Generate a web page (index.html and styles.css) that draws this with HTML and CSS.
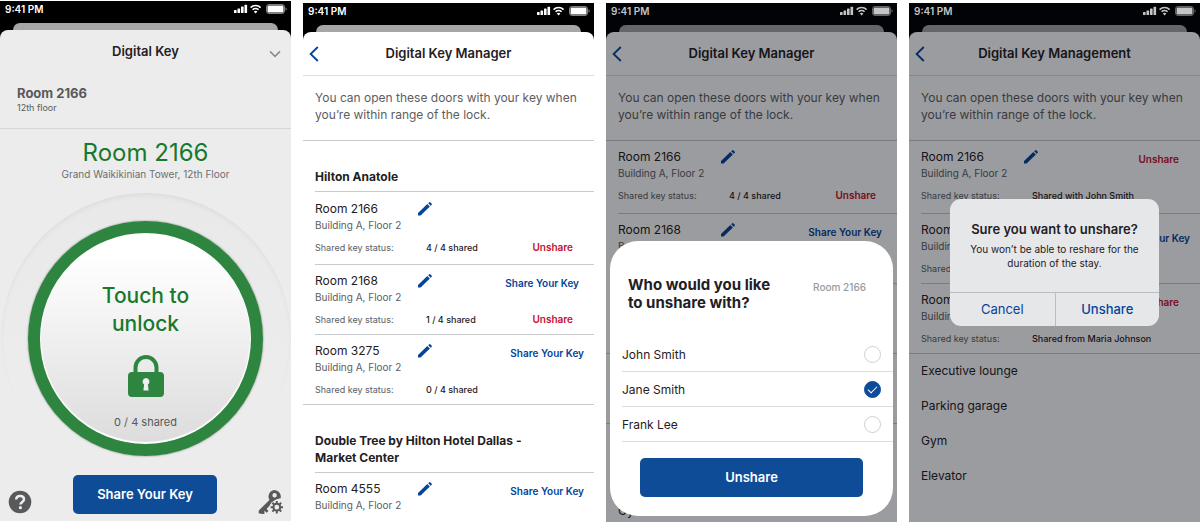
FILE: index.html
```html
<!DOCTYPE html>
<html lang="en">
<head>
<meta charset="utf-8">
<meta name="viewport" content="width=device-width, initial-scale=1">
<title>Digital Key</title>
<link rel="stylesheet" href="styles.css">
</head>
<body>
<svg class="defs" aria-hidden="true">
  <symbol id="status" viewBox="0 0 54 12">
    <rect x="0" y="7" width="2.6" height="3" rx=".6"/><rect x="3.5" y="5.4" width="2.6" height="4.6" rx=".6"/><rect x="7" y="3.6" width="2.6" height="6.4" rx=".6"/><rect x="10.5" y="1.8" width="2.6" height="8.2" rx=".6"/>
    <g fill="none" stroke="currentColor" stroke-width="1.6"><path d="M16.6 4.6a7.1 7.1 0 0 1 10 0"/><path d="M18.6 6.8a4.3 4.3 0 0 1 6 0"/></g>
    <path d="M21.6 10.4l-1.8-1.9a2.6 2.6 0 0 1 3.6 0z"/>
    <rect x="32.5" y="1.5" width="18" height="9" rx="2.4" fill="none" stroke="currentColor" stroke-opacity=".5"/><rect x="33.5" y="2.500" width="16" height="7" rx="1.2"/><path d="M51.6 4.3c1.4.5 1.4 2.9 0 3.4z" opacity=".6"/>
  </symbol>
  <symbol id="pencil" viewBox="0 0 14 14">
    <path d="M0 13.6v-2.5l9.3-9 2.6 2.5-9.3 9z"/><path d="M10.2 1.3l.9-.9c.4-.4.9-.4 1.3 0l1.2 1.2c.4.4.4.9 0 1.3l-.9.9z"/>
  </symbol>
  <symbol id="back" viewBox="0 0 10 16"><path d="M8.8 1L1.6 8l7.2 7" fill="none" stroke="currentColor" stroke-width="1.8"/></symbol>
</svg>

<main class="screens">
  <section class="phone phone--key">
    <div class="statusbar"><span>9:41 PM</span><svg class="statusbar__icons"><use href="#status"/></svg></div>
    <div class="peek"></div>
    <div class="sheet sheet--grey">
      <header class="bar">
        <h1 class="bar__title">Digital Key</h1>
        <button class="bar__close" aria-label="Close"><svg width="12" height="8" viewBox="0 0 12 8"><path d="M1 1.4l5 5 5-5" fill="none" stroke="currentColor" stroke-width="1.5"/></svg></button>
      </header>
      <div class="summary">
        <h2 class="summary__room">Room 2166</h2>
        <p class="summary__floor">12th floor</p>
      </div>
      <div class="place">
        <h2 class="place__room">Room 2166</h2>
        <p class="place__tower">Grand Waikikinian Tower, 12th Floor</p>
      </div>
      <div class="dial">
        <button class="ring">
          <span class="ring__text">Touch to<br>unlock</span>
          <svg class="ring__lock" viewBox="0 0 36 42"><path d="M7.500 18v-5.500a10.500 10.500 0 0 1 21 0V18" fill="none" stroke="currentColor" stroke-width="4"/><rect x="0" y="17" width="36" height="25" rx="4"/><path d="M18 23a3.500 3.500 0 0 0-1.900 6.400L15.400 35.500h5.200l-.7-6.100A3.500 3.500 0 0 0 18 23z" fill="#efefef"/></svg>
          <span class="ring__count">0 / 4 shared</span>
        </button>
      </div>
      <footer class="toolbar">
        <button class="toolbar__icon" aria-label="Help"><svg width="24" height="24" viewBox="0 0 24 24"><circle cx="12" cy="12" r="11.300" fill="currentColor"/><path d="M8.200 9.600c0-2.300 1.600-3.700 3.900-3.700s3.900 1.300 3.900 3.300c0 2.700-3.500 2.700-3.500 5.400" fill="none" stroke="#ececec" stroke-width="2.500"/><circle cx="12.400" cy="17.700" r="1.600" fill="#ececec"/></svg></button>
        <button class="primary primary--share">Share Your Key</button>
        <button class="toolbar__icon" aria-label="Key settings"><svg width="26" height="24" viewBox="0 0 26 24"><path fill-rule="evenodd" d="M16.200 0a6.600 6.600 0 0 1 6.400 8.200l-3.100.8-2.500 1-2.100 2-6.300 7 1.900 1.900-1.900 1.900-1.800-1.700-.9 1 1 1-1.300 1.200L.6 23.200l.2-2.700L11.400 9.900A6.600 6.600 0 0 1 16.200 0zM16.600 3.100a2.200 2.200 0 1 0 0 4.400 2.200 2.200 0 0 0 0-4.400z"/><circle cx="18.800" cy="17.200" r="7" fill="#ececec"/><g fill="none" stroke="currentColor" stroke-width="2"><circle cx="18.800" cy="17.200" r="3.400"/><path d="M18.800 11v2.500M18.800 20.900v2.500M12.600 17.200h2.500M22.500 17.200H25M14.400 12.800l1.800 1.800M21.400 19.800l1.800 1.800M14.400 21.600l1.800-1.800M21.400 14.600l1.800-1.800"/></g></svg></button>
      </footer>
    </div>
  </section>

  <section class="phone">
    <div class="statusbar"><span>9:41 PM</span><svg class="statusbar__icons"><use href="#status"/></svg></div>
    <div class="peek"></div>
    <div class="sheet">
      <header class="bar bar--ruled">
        <button class="bar__back" aria-label="Back"><svg><use href="#back"/></svg></button>
        <h1 class="bar__title">Digital Key Manager</h1>
      </header>
      <p class="intro">You can open these doors with your key when you’re within range of the lock.</p>
      <h2 class="hotel">Hilton Anatole</h2>
      <ul class="rooms">
        <li class="room room--roomy">
          <h3 class="room__name">Room 2166</h3>
          <button class="room__edit" aria-label="Rename Room 2166"><svg><use href="#pencil"/></svg></button>
          <p class="room__place">Building A, Floor 2</p>
          <span class="room__label">Shared key status:</span><span class="room__value">4 / 4 shared</span>
          <div class="room__actions"><button class="link link--unshare link--low">Unshare</button></div>
        </li>
        <li class="room">
          <h3 class="room__name">Room 2168</h3>
          <button class="room__edit" aria-label="Rename Room 2168"><svg><use href="#pencil"/></svg></button>
          <p class="room__place">Building A, Floor 2</p>
          <span class="room__label">Shared key status:</span><span class="room__value">1 / 4 shared</span>
          <div class="room__actions"><button class="link link--paired">Share Your Key</button><button class="link link--unshare link--low">Unshare</button></div>
        </li>
        <li class="room room--last">
          <h3 class="room__name">Room 3275</h3>
          <button class="room__edit" aria-label="Rename Room 3275"><svg><use href="#pencil"/></svg></button>
          <p class="room__place">Building A, Floor 2</p>
          <span class="room__label">Shared key status:</span><span class="room__value">0 / 4 shared</span>
          <div class="room__actions"><button class="link">Share Your Key</button></div>
        </li>
      </ul>
      <h2 class="hotel">Double Tree by Hilton Hotel Dallas - Market Center</h2>
      <ul class="rooms">
        <li class="room room--open">
          <h3 class="room__name">Room 4555</h3>
          <button class="room__edit" aria-label="Rename Room 4555"><svg><use href="#pencil"/></svg></button>
          <p class="room__place">Building A, Floor 2</p>
          <div class="room__actions"><button class="link">Share Your Key</button></div>
        </li>
      </ul>
    </div>
  </section>

  <section class="phone phone--dimmed">
    <div class="statusbar"><span>9:41 PM</span><svg class="statusbar__icons"><use href="#status"/></svg></div>
    <div class="peek"></div>
    <div class="sheet">
      <header class="bar bar--ruled">
        <button class="bar__back" aria-label="Back"><svg><use href="#back"/></svg></button>
        <h1 class="bar__title">Digital Key Manager</h1>
      </header>
      <p class="intro">You can open these doors with your key when you’re within range of the lock.</p>
      <ul class="rooms">
        <li class="room room--first">
          <h3 class="room__name">Room 2166</h3>
          <button class="room__edit" aria-label="Rename Room 2166"><svg><use href="#pencil"/></svg></button>
          <p class="room__place">Building A, Floor 2</p>
          <span class="room__label">Shared key status:</span><span class="room__value">4 / 4 shared</span>
          <div class="room__actions"><button class="link link--unshare link--low">Unshare</button></div>
        </li>
        <li class="room">
          <h3 class="room__name">Room 2168</h3>
          <button class="room__edit" aria-label="Rename Room 2168"><svg><use href="#pencil"/></svg></button>
          <p class="room__place">Building A, Floor 2</p>
          <div class="room__actions"><button class="link link--paired">Share Your Key</button></div>
        </li>
        <li class="room room--last"></li>
        <li class="room room--last"></li>
      </ul>
      <ul class="areas areas--tail">
        <li class="areas__item"></li>
        <li class="areas__item"></li>
        <li class="areas__item">Gym</li>
      </ul>
    </div>
    <div class="overlay overlay--bottom">
      <form class="chooser">
        <div class="chooser__head">
          <h2 class="chooser__title">Who would you like to unshare with?</h2>
          <span class="chooser__room">Room 2166</span>
        </div>
        <div class="chooser__list">
          <label class="guest">John Smith<input class="guest__radio" type="radio" name="guest"></label>
          <label class="guest">Jane Smith<input class="guest__radio" type="radio" name="guest" checked></label>
          <label class="guest">Frank Lee<input class="guest__radio" type="radio" name="guest"></label>
        </div>
        <button class="primary primary--wide" type="button">Unshare</button>
      </form>
    </div>
  </section>

  <section class="phone phone--dimmed">
    <div class="statusbar"><span>9:41 PM</span><svg class="statusbar__icons"><use href="#status"/></svg></div>
    <div class="peek"></div>
    <div class="sheet">
      <header class="bar bar--ruled">
        <button class="bar__back" aria-label="Back"><svg><use href="#back"/></svg></button>
        <h1 class="bar__title">Digital Key Management</h1>
      </header>
      <p class="intro">You can open these doors with your key when you’re within range of the lock.</p>
      <ul class="rooms">
        <li class="room room--first">
          <h3 class="room__name">Room 2166</h3>
          <button class="room__edit" aria-label="Rename Room 2166"><svg><use href="#pencil"/></svg></button>
          <p class="room__place">Building A, Floor 2</p>
          <span class="room__label">Shared key status:</span><span class="room__value">Shared with John Smith</span>
          <div class="room__actions"><button class="link link--unshare">Unshare</button></div>
        </li>
        <li class="room">
          <h3 class="room__name">Room 2168</h3>
          <p class="room__place">Building A, Floor 2</p>
          <span class="room__label">Shared key status:</span>
          <div class="room__actions room__actions--mid"><button class="link">Share Your Key</button></div>
        </li>
        <li class="room room--last">
          <h3 class="room__name">Room 3275</h3>
          <p class="room__place">Building A, Floor 2</p>
          <span class="room__label">Shared key status:</span><span class="room__value">Shared from Maria Johnson</span>
          <div class="room__actions"><button class="link link--unshare">Unshare</button></div>
        </li>
      </ul>
      <ul class="areas">
        <li class="areas__item">Executive lounge</li>
        <li class="areas__item">Parking garage</li>
        <li class="areas__item">Gym</li>
        <li class="areas__item">Elevator</li>
      </ul>
    </div>
    <div class="overlay overlay--center">
      <div class="alert" role="alertdialog" aria-labelledby="alert-title">
        <div class="alert__body">
          <h2 class="alert__title" id="alert-title">Sure you want to unshare?</h2>
          <p class="alert__text">You won’t be able to reshare for the duration of the stay.</p>
        </div>
        <div class="alert__buttons">
          <button class="alert__button">Cancel</button>
          <button class="alert__button alert__button--strong">Unshare</button>
        </div>
      </div>
    </div>
  </section>
</main>
</body>
</html>
```
FILE: styles.css
```css
* { box-sizing: border-box; }

:root {
  --blue: #0f4c97;
  --link: #05449a;
  --green: #2e8540;
  --red: #c8102e;
  --ink: #1f2023;
  --muted: #5c5d60;
  --rule: #c9cacd;
}

body {
  margin: 0;
  background: #fff;
  color: var(--ink);
  font: 12px/17px Inter, "Liberation Sans", sans-serif;
}

h1, h2, h3, p, ul { margin: 0; padding: 0; font-weight: inherit; font-size: inherit; }
ul { list-style: none; }
button { margin: 0; padding: 0; border: 0; background: none; color: inherit; font: inherit; cursor: pointer; }
svg { display: block; fill: currentColor; }
.defs { position: absolute; width: 0; height: 0; }

.screens {
  display: grid;
  grid-template-columns: repeat(4, 1fr);
  gap: 12px;
  min-height: 100vh;
}

.phone {
  position: relative;
  display: flex;
  flex-direction: column;
  margin: 3px 0 2px;
  background: #000;
}
.phone--key { margin: 1px 0 3px; }

.statusbar {
  display: flex;
  justify-content: space-between;
  padding: 0 3px 5px 5px;
  color: #fff;
  font-size: 10px;
  font-weight: 600;
}
.phone--dimmed .statusbar { position: relative; z-index: 1; color: #c4c5c7; }
.statusbar__icons { width: 54px; height: 12px; margin-top: 2px; }
.peek { height: 7px; margin: 0 13px; border-radius: 8px 8px 0 0; background: #a6a6a7; }

.sheet {
  display: flex;
  flex-direction: column;
  flex: 1;
  border-radius: 8px 8px 0 0;
  background: #fff;
}
.sheet--grey { background: #ececec; }

.bar {
  display: grid;
  grid-template-columns: 26px 1fr 26px;
  align-items: center;
  height: 43px;
}
.bar--ruled { height: 44px; border-bottom: 1px solid #dddde0; }
.bar__title { grid-column: 2; font-size: 13px; font-weight: 600; text-align: center; }
.bar__close { padding: 4px 0 0 4px; color: #8c8c8c; }
.bar__back { padding-left: 6px; color: var(--link); }
.bar__back svg { width: 10px; height: 16px; }

/* Digital key screen */
.summary { padding: 12px 17px 15px; border-bottom: 1px solid #d6d6d6; color: #58595b; }
.summary__room { font-size: 13px; font-weight: 700; }
.summary__floor { font-size: 9px; line-height: 11px; }
.place { padding: 9px 0 13px; text-align: center; }
.place__room { color: #17792f; font-size: 24px; font-weight: 400; line-height: 30px; }
.place__tower { color: #6d6e70; font-size: 10px; line-height: 12px; }

.dial {
  display: grid;
  place-items: center;
  align-self: center;
  width: 290px;
  height: 290px;
  margin-bottom: -10px;
  border-radius: 50%;
  background: linear-gradient(#e9e9e9, #ececec 60%);
  box-shadow: inset 0 3px 6px -2px rgba(0, 0, 0, .08);
}
.ring {
  display: flex;
  flex-direction: column;
  align-items: center;
  width: 235px;
  height: 235px;
  padding-top: 49px;
  border: 12px solid var(--green);
  border-radius: 50%;
  background: linear-gradient(#fff 10%, #dcdcdc) padding-box;
  box-shadow: 0 0 2px rgba(0, 0, 0, .5), inset 0 -1px 1px 1px #fff;
  color: var(--green);
}
.ring__text { color: #17792f; font-size: 21px; font-weight: 500; line-height: 28px; }
.ring__lock { width: 36px; height: 42px; margin: 17px 0; }
.ring__count { color: #58595b; font-size: 11px; }

.toolbar {
  display: flex;
  justify-content: space-between;
  align-items: flex-end;
  margin-top: auto;
  padding: 0 7px 7px 8px;
  color: #58595b;
}
.toolbar__icon { position: relative; }

.primary {
  position: relative;
  height: 39px;
  border-radius: 5px;
  background: var(--blue);
  color: #fff;
  font-size: 13px;
  font-weight: 600;
}
.primary--share { width: 144px; }
.primary--wide { margin: 16px 30px 0; }

/* Key manager screens */
.intro { padding: 13px 12px 17px; border-bottom: 1px solid var(--rule); color: var(--muted); }
.hotel { margin-left: 12px; padding: 27px 40px 6px 0; border-bottom: 1px solid var(--rule); font-weight: 700; }

.room {
  display: grid;
  grid-template-columns: 103px 1fr auto;
  grid-template-rows: 17px 22px 17px;
  margin-left: 12px;
  padding: 7px 0 6px;
  border-bottom: 1px solid var(--rule);
}
.room--first { padding-bottom: 9px; }
.room--roomy { padding: 8px 0; }
.room--last { margin-left: 0; padding-left: 12px; }
.room--open { grid-template-rows: 17px 17px; padding-bottom: 0; border: 0; }
.room__edit { justify-self: start; align-self: center; }
.room__edit svg { width: 14px; height: 14px; color: var(--link); }
.room__place { grid-column: 1; grid-row: 2; color: var(--muted); font-size: 10px; white-space: nowrap; }
.room__label { grid-column: 1; grid-row: 3; color: var(--muted); font-size: 9px; }
.room__value { grid-column: 2; grid-row: 3; width: 0; padding-left: 8px; font-size: 9px; font-weight: 500; white-space: nowrap; }
.room__actions {
  display: flex;
  flex-direction: column;
  align-items: flex-end;
  grid-column: 3;
  grid-row: 1 / -1;
  padding-top: 3px;
}
.room__actions--mid { padding-top: 9px; }

.link { margin-right: 10px; color: var(--link); font-size: 10px; font-weight: 600; }
.link--paired { margin-right: 15px; }
.link--unshare { margin-right: 21px; color: var(--red); }
.link--low { margin-top: auto; }

.areas { padding-left: 12px; }
.areas__item { min-height: 35px; padding: 8px 0 10px; }
.areas--tail .areas__item:last-child { min-height: 0; padding-bottom: 0; }

/* Overlays */
.overlay { position: absolute; inset: 0; display: flex; background: rgba(5, 7, 15, .4); }
.overlay--bottom { align-items: flex-end; padding: 0 4px 6px; }
.overlay--center { align-items: center; justify-content: center; }

.chooser {
  display: flex;
  flex-direction: column;
  flex: 1;
  padding: 35px 0 19px;
  border-radius: 28px;
  background: #fff;
}
.chooser__head { display: flex; justify-content: space-between; padding: 0 27px 25px 18px; }
.chooser__title { width: 150px; font-size: 15px; font-weight: 700; line-height: 18px; }
.chooser__room { padding-top: 3px; color: #999a9c; font-size: 10px; font-weight: 500; }
.chooser__list { padding-left: 12px; }
.guest {
  display: flex;
  justify-content: space-between;
  align-items: center;
  height: 35px;
  padding-right: 12px;
  border-bottom: 1px solid #dcdcde;
}
.guest__radio {
  appearance: none;
  display: grid;
  place-items: center;
  width: 17px;
  height: 17px;
  margin: 0;
  border: 1px solid #d0d0d2;
  border-radius: 50%;
}
.guest__radio:checked { border-color: var(--blue); background: var(--blue); }
.guest__radio:checked::before {
  content: "";
  width: 8px;
  height: 4px;
  margin-bottom: 2px;
  border: solid #fff;
  border-width: 0 0 1px 1px;
  transform: rotate(-45deg);
}

.alert {
  width: 209px;
  border-radius: 11px;
  background: #e6e7e9;
  text-align: center;
}
.alert__body { padding: 22px 16px; }
.alert__title { font-size: 13px; font-weight: 600; white-space: nowrap; }
.alert__text { padding-top: 4px; font-size: 10px; line-height: 14px; }
.alert__buttons { display: grid; grid-template-columns: 1fr 1fr; border-top: 1px solid #bcbdc0; }
.alert__button { height: 33px; color: var(--link); font-size: 13px; }
.alert__button--strong { border-left: 1px solid #bcbdc0; font-weight: 500; }
```
